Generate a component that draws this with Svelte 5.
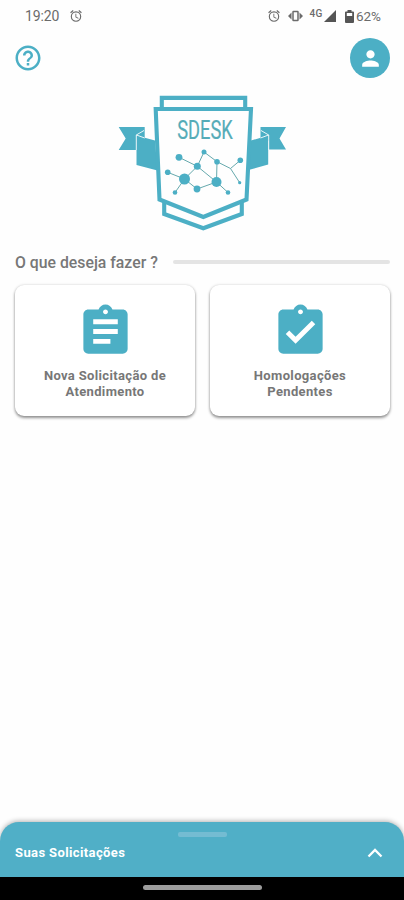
<script>
  const actions = [
    {
      id: 'new',
      lines: ['Nova Solicitação de', 'Atendimento'],
      icon: 'M19 3h-4.18C14.4 1.84 13.3 1 12 1s-2.4.84-2.82 2H5c-1.1 0-2 .9-2 2v14c0 1.1.9 2 2 2h14c1.1 0 2-.9 2-2V5c0-1.1-.9-2-2-2zm-7 0c.55 0 1 .45 1 1s-.45 1-1 1-1-.45-1-1 .45-1 1-1zm2 14H7v-2h7v2zm3-4H7v-2h10v2zm0-4H7V7h10v2z'
    },
    {
      id: 'pending',
      lines: ['Homologações', 'Pendentes'],
      icon: 'M19 3h-4.18C14.4 1.84 13.3 1 12 1s-2.4.84-2.82 2H5c-1.1 0-2 .9-2 2v14c0 1.1.9 2 2 2h14c1.1 0 2-.9 2-2V5c0-1.1-.9-2-2-2zm-7 0c.55 0 1 .45 1 1s-.45 1-1 1-1-.45-1-1 .45-1 1-1zm-2 14l-4-4 1.41-1.41L10 14.17l6.59-6.59L18 9l-8 8z'
    }
  ]

  // network drawn inside the shield
  const nodes = [
    { x: 69, y: 72.3, r: 3.4 },
    { x: 94, y: 67, r: 2.5 },
    { x: 87.3, y: 81.3, r: 3.5 },
    { x: 107, y: 76.7, r: 2.8 },
    { x: 130.3, y: 75.3, r: 2.8 },
    { x: 57.7, y: 87.3, r: 2.8 },
    { x: 74.5, y: 94, r: 5.5 },
    { x: 87, y: 104, r: 3.4 },
    { x: 106.5, y: 97, r: 5 },
    { x: 65, y: 107.5, r: 2.3 },
    { x: 118, y: 107.5, r: 2.3 },
    { x: 129.7, y: 97.7, r: 1.6 }
  ]
</script>

{#snippet alarm()}
  <svg class="alarm" viewBox="0 0 24 24" aria-hidden="true">
    <path d="M22 5.7l-4.6-3.9-1.3 1.5 4.6 3.9L22 5.7zM7.9 3.4L6.6 1.9 2 5.7l1.3 1.5 4.6-3.8zM12.5 8H11v6l4.7 2.9.8-1.3-4-2.3V8zM12 4a9 9 0 1 0 0 18 9 9 0 0 0 0-18zm0 16a7 7 0 1 1 0-14 7 7 0 0 1 0 14z" />
  </svg>
{/snippet}

<div class="screen">
  <div class="status">
    <span class="status__time">19:20</span>
    {@render alarm()}
    <div class="status__right">
      {@render alarm()}
      <svg class="vibrate" viewBox="0 0 15 12" aria-hidden="true">
        <rect x="5" y="1.5" width="5" height="9" rx="0.5" fill="none" stroke="currentColor" stroke-width="1.5" />
        <path d="M3.500 2.500v7L0 6zM11.500 2.500v7L15 6z" />
      </svg>
      <span class="status__net">4G</span>
      <svg class="signal" viewBox="0 0 12 12" aria-hidden="true"><path d="M12 0v12H0z" /></svg>
      <svg class="battery" viewBox="0 0 9 13" aria-hidden="true">
        <path fill-rule="evenodd" d="M2.500 0h4v1.500H8q1 0 1 1V12q0 1-1 1H1q-1 0-1-1V2.500q0-1 1-1h1.500zM1.800 3v3h5.400V3z" />
      </svg>
      <span class="status__level">62%</span>
    </div>
  </div>

  <header class="top">
    <button class="help" aria-label="Ajuda">
      <svg viewBox="0 0 24 24">
        <path d="M11 18h2v-2h-2v2zm1-16C6.480 2 2 6.480 2 12s4.480 10 10 10 10-4.480 10-10S17.520 2 12 2zm0 18c-4.410 0-8-3.590-8-8s3.590-8 8-8 8 3.590 8 8-3.590 8-8 8zm0-14c-2.210 0-4 1.790-4 4h2c0-1.100.900-2 2-2s2 .900 2 2c0 2-3 1.750-3 5h2c0-2.250 3-2.500 3-5 0-2.210-1.790-4-4-4z" />
      </svg>
    </button>
    <button class="profile" aria-label="Perfil">
      <svg viewBox="0 0 24 24">
        <path d="M12 12c2.210 0 4-1.790 4-4s-1.790-4-4-4-4 1.790-4 4 1.790 4 4 4zm0 2c-2.670 0-8 1.340-8 4v2h16v-2c0-2.660-5.330-4-8-4z" />
      </svg>
    </button>
  </header>

  <svg class="logo" viewBox="0 0 190 155" role="img" aria-label="SDESK">
    <g class="logo__fill">
      <path d="M8.700 42H34.700V53L27 56V65H8.700L15.700 53.500z" />
      <path d="M176 42H150.500v11l8 3v8.500H176l-6.500-11z" />
      <path d="M26.500 50.500L45 55.500l2.500 30L26.500 80z" />
      <path d="M158.200 50.500L141 55.500l-2.500 29.500 19.700-5.500z" />
    </g>
    <path class="logo__fold" d="M26.300 65V50L34 45.500M26.500 50L34.700 53M158.700 65V50L151 45.500M158.500 50L150.500 53" />
    <g class="logo__line">
      <path d="M51.800 23V12.900H135.200V23" />
      <path d="M54.200 117v12L93.300 143.200 131.800 129v-12" />
      <path class="logo__shield" d="M45.700 24H141L136.500 114.500 93.300 132 49.500 114.500z" />
    </g>
    <path class="logo__links" d="M69 72.300L87.300 81.300 94 67 107 76.700 120.500 83.500 130.300 75.300M120.500 83.500L129.700 97.700M107 76.700L106.500 97 87.300 81.300 74.500 94 57.700 87.300M65 107.500L74.500 94 87 104 106.500 97 118 107.500" />
    {#each nodes as node}
      <circle class="logo__node" cx={node.x} cy={node.y} r={node.r} />
    {/each}
    <text class="logo__name" x="67.200" y="54" textLength="55.500" lengthAdjust="spacingAndGlyphs">SDESK</text>
  </svg>

  <div class="question">
    <h1>O que deseja fazer ?</h1>
    <span class="question__rule"></span>
  </div>

  <main class="actions">
    {#each actions as action (action.id)}
      <button class="card">
        <svg viewBox="0 0 24 24" aria-hidden="true"><path d={action.icon} /></svg>
        <span>{action.lines[0]}<br />{action.lines[1]}</span>
      </button>
    {/each}
  </main>

  <footer class="sheet">
    <span class="sheet__handle"></span>
    <div class="sheet__row">
      <h2>Suas Solicitações</h2>
      <svg viewBox="0 0 16 10" aria-hidden="true"><path d="M1.500 8.500L8 2l6.500 6.500" /></svg>
    </div>
  </footer>
  <div class="nav"><span></span></div>
</div>

<style>
  :global(body) {
    background: #fefefe;
  }

  .screen {
    --main: #4cafc5;
    display: flex;
    flex-direction: column;
    height: 900px;
    overflow: hidden;
    font-family: Roboto, sans-serif;
    color: #777;
  }

  button {
    padding: 0;
    border: none;
    font-family: inherit;
    cursor: pointer;
  }

  svg {
    display: block;
    flex: none;
    fill: currentColor;
  }

  .status {
    display: flex;
    align-items: center;
    height: 32px;
    padding: 0 23px 0 25px;
    font-size: 14px;
    color: #6b6b6b;
  }

  .status__time {
    width: 44px;
    letter-spacing: -0.1px;
  }

  .alarm {
    width: 14px;
    height: 14px;
  }

  .status__right {
    display: flex;
    align-items: center;
    margin-left: auto;
  }

  .vibrate {
    width: 15px;
    height: 12px;
    margin-left: 7px;
  }

  .status__net {
    margin: -6px 1px 0 6px;
    font-size: 10px;
    font-weight: 500;
    letter-spacing: 0.5px;
  }

  .signal {
    width: 12px;
    height: 12px;
    color: #555;
  }

  .battery {
    width: 9px;
    height: 13px;
    margin: 0 2px 0 9px;
    color: #555;
  }

  .status__level {
    font-size: 13.5px;
  }

  .top {
    display: flex;
    justify-content: space-between;
    align-items: center;
    height: 40px;
    margin-top: 6px;
    padding: 0 14px 0 13px;
  }

  .help {
    background: transparent;
    color: var(--main);
  }

  .help svg {
    width: 30px;
    height: 30px;
  }

  .profile {
    display: grid;
    place-items: center;
    width: 40px;
    height: 40px;
    border-radius: 50%;
    background: var(--main);
    color: #fff;
  }

  .profile svg {
    width: 25px;
    height: 25px;
  }

  .logo {
    width: 190px;
    height: 155px;
    margin: 7px 0 0 110px;
  }

  .logo__fill,
  .logo__node {
    fill: var(--main);
  }

  .logo__fold {
    fill: none;
    stroke: #fefefe;
    stroke-width: 0.9;
  }

  .logo__line {
    fill: none;
    stroke: var(--main);
    stroke-width: 4.1;
  }

  .logo__shield {
    fill: #fefefe;
  }

  .logo__links {
    fill: none;
    stroke: #66a9ad;
    stroke-width: 1;
  }

  .logo__name {
    font-size: 25px;
    fill: #55acb8;
    stroke: #55acb8;
    stroke-width: 0.2;
  }

  .question {
    display: flex;
    align-items: center;
    height: 24px;
    margin-top: 10px;
    padding: 0 14px 0 15px;
  }

  .question h1 {
    width: 158px;
    margin: 0;
    font-size: 15.8px;
    font-weight: 500;
    white-space: nowrap;
  }

  .question__rule {
    flex: 1;
    height: 4px;
    border-radius: 2px;
    background: #e4e4e4;
  }

  .actions {
    display: grid;
    grid-template-columns: 1fr 1fr;
    gap: 15px;
    margin-top: 11px;
    padding: 0 14px 0 15px;
  }

  .card {
    display: flex;
    flex-direction: column;
    align-items: center;
    height: 131px;
    padding-top: 17px;
    border-radius: 9px;
    background: #fff;
    box-shadow: 0 2px 3px rgba(0, 0, 0, 0.4), 0 0 3px rgba(0, 0, 0, 0.16);
    color: #777;
    font-size: 13px;
    font-weight: 700;
    line-height: 16px;
    letter-spacing: 0.35px;
  }

  .card svg {
    width: 59px;
    height: 59px;
    margin-bottom: 7px;
    color: var(--main);
  }

  .sheet {
    display: flex;
    flex-direction: column;
    align-items: center;
    height: 55px;
    margin-top: auto;
    border-radius: 19px 19px 0 0;
    background: #50afc7;
    box-shadow: 0 -1px 5px rgba(0, 0, 0, 0.3);
    color: #fff;
  }

  .sheet__handle {
    width: 49px;
    height: 5px;
    margin-top: 10px;
    border-radius: 2px;
    background: #74bcd2;
  }

  .sheet__row {
    display: flex;
    align-self: stretch;
    align-items: center;
    justify-content: space-between;
    margin-top: 8px;
    padding: 0 21px 0 15px;
  }

  .sheet__row h2 {
    margin: 0;
    font-size: 13px;
    font-weight: 700;
    line-height: 16px;
    letter-spacing: 0.38px;
  }

  .sheet__row svg {
    width: 16px;
    height: 10px;
    fill: none;
    stroke: #fff;
    stroke-width: 2.3;
  }

  .nav {
    display: flex;
    justify-content: center;
    height: 23px;
    background: #000;
  }

  .nav span {
    width: 119px;
    height: 5px;
    margin-top: 8px;
    border-radius: 3px;
    background: #9c9c9c;
  }
</style>
